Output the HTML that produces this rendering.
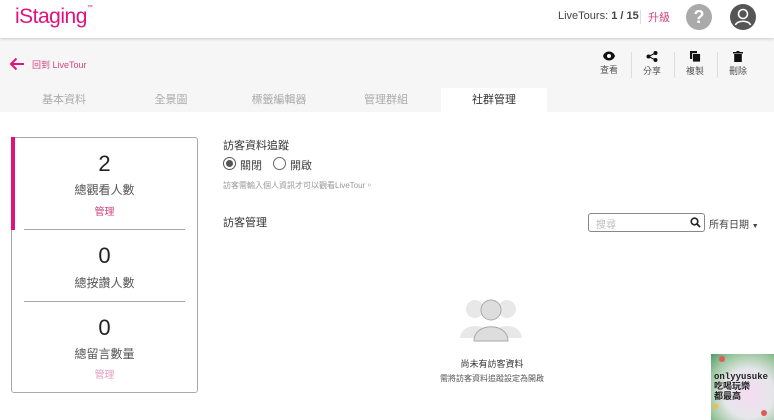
<!DOCTYPE html>
<html><head><meta charset="utf-8"><style>
*{margin:0;padding:0;box-sizing:border-box}
body{width:774px;height:420px;overflow:hidden;background:#fff;font-family:"Liberation Sans","Noto Sans CJK TC",sans-serif;color:#333;position:relative}
.abs{position:absolute}
.hdr{left:0;top:0;width:774px;height:38px;background:#fff;box-shadow:0 1px 3px rgba(0,0,0,.18);z-index:2}
.gray{left:0;top:38px;width:774px;height:74px;background:#f6f6f6}
.tab{top:88px;height:24px;width:106px;text-align:center;font-size:11px;color:#aaa;line-height:24px}
.act{background:#fff;color:#333}
.tool{top:51px;width:40px;text-align:center;font-size:9px;color:#555}
.sep{top:52px;width:1px;height:26px;background:#ddd}
.card{left:11px;top:137px;width:187px;height:256px;border:1px solid #aaa;border-radius:3px}
.num{width:187px;left:11px;text-align:center;font-size:22px;color:#222}
.lbl{width:187px;left:11px;text-align:center;font-size:12px;color:#555}
.lnk{width:187px;left:11px;text-align:center;font-size:10px;color:#d3447f}
.hr{left:24px;width:161px;height:1px;background:#aaa}
</style></head><body>
<div class="abs hdr">
 <div class="abs" style="left:15px;top:5px;font-size:21px;color:#e2127a;letter-spacing:-0.5px">iStaging<span style="font-size:6px;vertical-align:top">™</span></div>
 <div class="abs" style="left:558px;top:10px;font-size:11px;color:#444">LiveTours: <b>1 / 15</b></div>
 <div class="abs" style="left:640px;top:10px;width:1px;height:14px;background:#ddd"></div>
 <div class="abs" style="left:648px;top:9px;font-size:11px;color:#d3447f">升級</div>
 <div class="abs" style="left:686px;top:4px;width:26px;height:26px;border-radius:50%;background:#aaa;color:#fff;font-weight:bold;font-size:18px;text-align:center;line-height:26px">?</div>
 <svg class="abs" style="left:730px;top:4px" width="26" height="26" viewBox="0 0 26 26"><circle cx="13" cy="13" r="13" fill="#555"/><circle cx="13" cy="10" r="4.5" fill="none" stroke="#fff" stroke-width="1.6"/><path d="M5.5 21 C7 16 19 16 20.5 21" fill="none" stroke="#fff" stroke-width="1.6"/></svg>
</div>
<div class="abs gray"></div>
<svg class="abs" style="left:9px;top:57px" width="16" height="14" viewBox="0 0 16 14"><path d="M15 7H2M7.5 1.5 2 7l5.5 5.5" stroke="#e2127a" stroke-width="2" fill="none"/></svg>
<div class="abs" style="left:32px;top:58px;font-size:9px;color:#d3447f">回到 LiveTour</div>
<div class="abs tool" style="left:589px"><svg width="12" height="10" viewBox="0 0 12 10"><path d="M0 5C2-1 10-1 12 5 10 11 2 11 0 5z" fill="#111"/><circle cx="6" cy="5" r="2" fill="#fff"/></svg><br>查看</div>
<div class="abs sep" style="left:631px"></div>
<div class="abs tool" style="left:632px"><svg width="12" height="11" viewBox="0 0 12 11"><circle cx="9.5" cy="2" r="2" fill="#111"/><circle cx="2.5" cy="5.5" r="2" fill="#111"/><circle cx="9.5" cy="9" r="2" fill="#111"/><path d="M9.5 2 2.5 5.5 9.5 9" stroke="#111" stroke-width="1" fill="none"/></svg><br>分享</div>
<div class="abs sep" style="left:674px"></div>
<div class="abs tool" style="left:675px"><svg width="11" height="11" viewBox="0 0 11 11"><rect x="0" y="0" width="7" height="8" fill="#111"/><rect x="2.5" y="2.5" width="8" height="8.5" fill="#111" stroke="#fff" stroke-width=".8"/></svg><br>複製</div>
<div class="abs sep" style="left:717px"></div>
<div class="abs tool" style="left:718px"><svg width="10" height="11" viewBox="0 0 10 11"><rect x="0" y="1" width="10" height="1.5" fill="#111"/><rect x="3.5" y="0" width="3" height="1.5" fill="#111"/><rect x="1.2" y="3" width="7.6" height="8" fill="#111"/></svg><br>刪除</div>
<div class="abs tab" style="left:11px">基本資料</div>
<div class="abs tab" style="left:118px">全景圖</div>
<div class="abs tab" style="left:226px">標籤編輯器</div>
<div class="abs tab" style="left:333px">管理群組</div>
<div class="abs tab act" style="left:441px">社群管理</div>

<div class="abs card"></div>
<div class="abs" style="left:11px;top:137px;width:4px;height:93px;background:#e2127a"></div>
<div class="abs num" style="top:151px">2</div>
<div class="abs lbl" style="top:181px">總觀看人數</div>
<div class="abs lnk" style="top:203px">管理</div>
<div class="abs hr" style="top:229px"></div>
<div class="abs num" style="top:243px">0</div>
<div class="abs lbl" style="top:274px">總按讚人數</div>
<div class="abs hr" style="top:301px"></div>
<div class="abs num" style="top:315px">0</div>
<div class="abs lbl" style="top:345px">總留言數量</div>
<div class="abs lnk" style="top:366px;color:#e5a0bf">管理</div>

<div class="abs" style="left:223px;top:137px;font-size:11px;color:#333">訪客資料追蹤</div>
<div class="abs" style="left:223px;top:157px;width:13px;height:13px;border:1px solid #555;border-radius:50%"><div style="margin:2px;width:7px;height:7px;border-radius:50%;background:#555"></div></div>
<div class="abs" style="left:240px;top:157px;font-size:11px;color:#444">關閉</div>
<div class="abs" style="left:273px;top:157px;width:13px;height:13px;border:1px solid #666;border-radius:50%"></div>
<div class="abs" style="left:290px;top:157px;font-size:11px;color:#444">開啟</div>
<div class="abs" style="left:223px;top:180px;font-size:8px;color:#999">訪客需輸入個人資訊才可以觀看LiveTour。</div>
<div class="abs" style="left:223px;top:214px;font-size:11px;color:#333">訪客管理</div>
<div class="abs" style="left:588px;top:213px;width:117px;height:19px;border:1px solid #888;border-radius:3px"></div>
<div class="abs" style="left:596px;top:216px;font-size:10px;color:#bbb">搜尋</div>
<svg class="abs" style="left:690px;top:217px" width="11" height="11" viewBox="0 0 11 11"><circle cx="4.5" cy="4.5" r="3.3" fill="none" stroke="#222" stroke-width="1.6"/><path d="M7 7l3 3" stroke="#222" stroke-width="1.8"/></svg>
<div class="abs" style="left:709px;top:216px;font-size:10px;color:#444">所有日期 <span style="font-size:7px">▼</span></div>

<svg class="abs" style="left:459px;top:296px" width="64" height="46" viewBox="0 0 64 46"><circle cx="16" cy="13" r="9" fill="#e8e8e8"/><circle cx="48" cy="13" r="9" fill="#e8e8e8"/><path d="M1 42C2 26 30 26 31 42z" fill="#e8e8e8"/><path d="M33 42C34 26 62 26 63 42z" fill="#e8e8e8"/><circle cx="32" cy="14" r="10" fill="#ddd" stroke="#aaa" stroke-width="1"/><path d="M15 45C15 26 49 26 49 45z" fill="#ddd" stroke="#aaa" stroke-width="1"/></svg>
<div class="abs" style="left:420px;top:357px;width:144px;text-align:center;font-size:9px;color:#333">尚未有訪客資料</div>
<div class="abs" style="left:420px;top:373px;width:144px;text-align:center;font-size:8px;color:#555">需將訪客資料追蹤設定為開啟</div>

<div class="abs" style="left:711px;top:354px;width:63px;height:66px;background:radial-gradient(circle at 60% 60%,#f4dcf2 0,#e6e6ea 45%,#9cc79f 75%,#4f9b68 100%);overflow:hidden">
 <div class="abs" style="left:3px;top:18px;font-size:9px;font-weight:bold;color:#222;line-height:10px;font-family:'Liberation Mono','Noto Sans CJK TC',monospace">onlyyusuke<br>吃喝玩樂<br>都最高</div>
 <div class="abs" style="left:8px;top:2px;width:6px;height:6px;border-radius:50%;background:#e05a5a"></div>
 <div class="abs" style="left:50px;top:56px;width:6px;height:6px;border-radius:50%;background:#e05a5a"></div>
 <div class="abs" style="left:2px;top:50px;width:5px;height:5px;border-radius:50%;background:#f0c040"></div>
</div>
</body></html>
